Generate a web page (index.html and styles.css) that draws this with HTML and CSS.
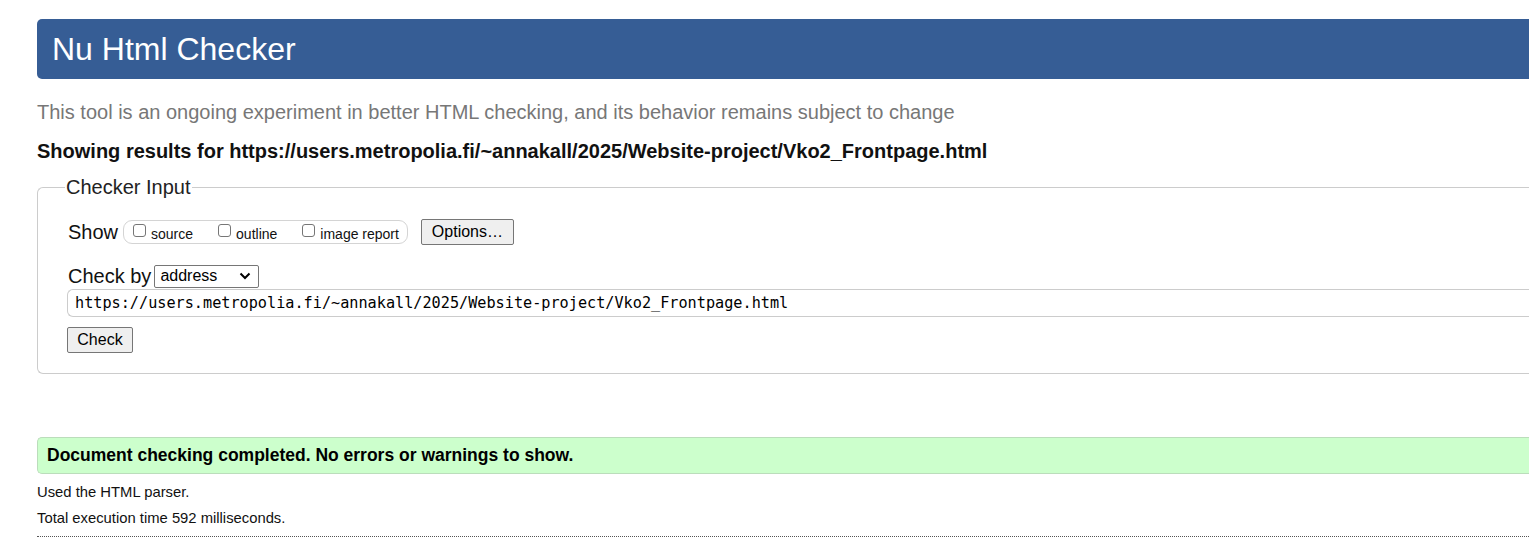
FILE: index.html
```html
<!DOCTYPE html>
<html lang="en">
<head>
<meta charset="utf-8">
<title>Showing results for https://users.metropolia.fi/~annakall/2025/Website-project/Vko2_Frontpage.html - Nu Html Checker</title>
<link rel="stylesheet" href="styles.css">
</head>
<body>
<div class="page">
  <h1 class="title">Nu Html Checker</h1>
  <p class="about">This tool is an ongoing experiment in better HTML checking, and its behavior remains subject to change</p>
  <p class="results-for">Showing results for https://users.metropolia.fi/~annakall/2025/Website-project/Vko2_Frontpage.html</p>
  <fieldset class="checker">
    <legend class="legend">Checker Input</legend>
    <div class="row show-row">
      <span class="label">Show</span>
      <span class="show-box">
        <label class="opt"><input type="checkbox" class="cb"><span>source</span></label>
        <label class="opt"><input type="checkbox" class="cb"><span>outline</span></label>
        <label class="opt"><input type="checkbox" class="cb"><span>image report</span></label>
      </span>
      <button class="btn options" type="button">Options…</button>
    </div>
    <div class="row by-row">
      <span class="label">Check by</span>
      <span class="select">address<svg class="chev" width="12" height="8" viewBox="0 0 12 8"><path d="M1.5 1.5 L6 6 L10.5 1.5" fill="none" stroke="#000" stroke-width="2"/></svg></span>
    </div>
    <div class="url">https://users.metropolia.fi/~annakall/2025/Website-project/Vko2_Frontpage.html</div>
    <button class="btn check" type="button">Check</button>
  </fieldset>
  <p class="success">Document checking completed. No errors or warnings to show.</p>
  <p class="details">Used the HTML parser.</p>
  <p class="details">Total execution time 592 milliseconds.</p>
  <hr class="sep">
</div>
</body>
</html>
```
FILE: styles.css
```css
html, body {
  margin: 0;
  padding: 0;
  overflow: hidden;
  background: #fff;
}
body {
  font-family: "Liberation Sans", Arial, sans-serif;
  color: #000;
}
.page {
  width: 1560px;
  padding: 19px 0 0 37px;
}
.title {
  margin: 0;
  height: 60px;
  box-sizing: border-box;
  background: #365d95;
  color: #fff;
  border-radius: 5px;
  font-size: 32px;
  font-weight: normal;
  line-height: 60px;
  padding-left: 15px;
}
.about {
  margin: 21px 0 0;
  font-size: 20px;
  line-height: 24px;
  color: #777;
}
.results-for {
  margin: 15px 0 0;
  font-size: 20px;
  line-height: 24px;
  font-weight: bold;
  color: #111;
}
.checker {
  margin: 13px 0 0;
  border: 1px solid #ccc;
  border-radius: 6px 0 0 6px;
  border-right: none;
  padding: 19px 0 20px 30px;
  min-width: 0;
}
.legend {
  font-size: 20px;
  padding: 0 1px;
  margin-left: -3px;
  color: #222;
}
.row {
  display: flex;
  align-items: center;
}
.label {
  font-size: 20px;
  color: #111;
}
.show-row {
  height: 26px;
  margin-top: 1px;
}
.show-box {
  display: flex;
  align-items: center;
  height: 24px;
  box-sizing: border-box;
  border: 1px solid #d4d4d4;
  border-radius: 9px;
  margin-left: 5px;
  padding: 0 8px 0 7px;
}
.opt {
  display: flex;
  align-items: center;
  font-size: 14px;
  color: #111;
  margin-right: 23px;
}
.opt:last-child { margin-right: 0; }
.opt span { margin-top: 3px; }
.cb {
  appearance: none;
  -webkit-appearance: none;
  width: 13px;
  height: 13px;
  margin: 1px 5px 0 2px;
  border: 1px solid #767676;
  border-radius: 3px;
  background: #fff;
  align-self: flex-start;
}
.btn {
  font-family: "Liberation Sans", Arial, sans-serif;
  font-size: 16px;
  background: #efefef;
  border: 1px solid #767676;
  border-radius: 2px;
  color: #000;
  padding: 0 9px;
  height: 26px;
}
.options {
  margin-left: 13px;
  width: 93px;
}
.by-row {
  margin-top: 19px;
  height: 24px;
}
.select {
  display: flex;
  align-items: center;
  justify-content: space-between;
  margin-left: 3px;
  width: 105px;
  height: 23px;
  box-sizing: border-box;
  border: 1px solid #767676;
  border-radius: 2px;
  padding: 0 7px 0 5px;
  font-size: 16px;
  color: #000;
}
.chev { display: block; }
.url {
  margin-top: 1px;
  height: 28px;
  box-sizing: border-box;
  border: 1px solid #ccc;
  border-right: none;
  border-radius: 6px 0 0 6px;
  padding-left: 7px;
  font-family: "DejaVu Sans Mono", "Liberation Mono", monospace;
  font-size: 15.2px;
  line-height: 26px;
  color: #000;
  margin-left: -1px;
}
.check {
  margin-top: 10px;
  margin-left: -1px;
  width: 66px;
  display: block;
}
.success {
  margin: 63px 0 0;
  height: 37px;
  box-sizing: border-box;
  background: #ccffcc;
  border: 1px solid #bbddbb;
  border-right: none;
  border-radius: 5px 0 0 5px;
  padding-left: 9px;
  font-size: 17.5px;
  font-weight: bold;
  line-height: 34px;
  color: #000;
}
.details {
  margin: 9px 0 0;
  font-size: 14.8px;
  line-height: 18px;
  color: #111;
}
.details + .details { margin-top: 8px; }
.sep {
  margin: 9px 0 0;
  border: none;
  border-top: 1px dotted #555;
  height: 0;
}
```
